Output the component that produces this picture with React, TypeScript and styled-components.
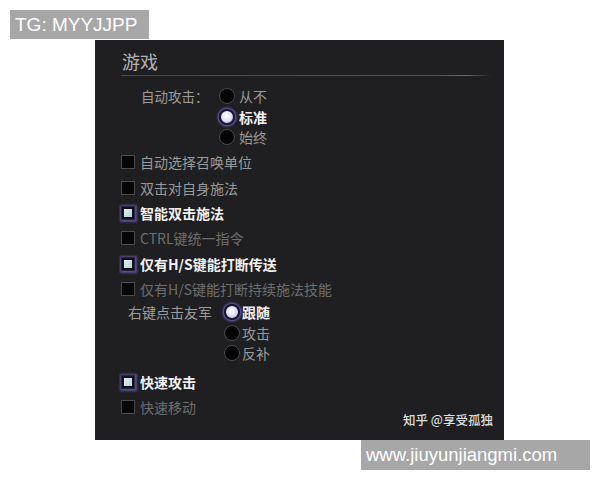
import React from "react";
import styled, { createGlobalStyle, css } from "styled-components";

const GlobalStyle = createGlobalStyle`
  html, body {
    margin: 0;
    padding: 0;
    background: #ffffff;
  }
  * { box-sizing: border-box; }
`;

const CJK = `"Noto Sans CJK SC", "Noto Sans", sans-serif`;

const Page = styled.div`
  width: 600px;
  height: 480px;
  padding-top: 10px;
  display: flex;
  flex-direction: column;
  background: #ffffff;
  overflow: hidden;
`;

const Tag = styled.div<{ $left: number; $width: number; $height: number; $size: number; $pad: number }>`
  margin-left: ${(p) => p.$left}px;
  width: ${(p) => p.$width}px;
  height: ${(p) => p.$height}px;
  padding-left: ${(p) => p.$pad}px;
  display: flex;
  align-items: center;
  background: #a7a7a7;
  color: #ffffff;
  font-family: "Liberation Sans", Arial, sans-serif;
  font-size: ${(p) => p.$size}px;
  white-space: nowrap;
  flex-shrink: 0;
`;

const Panel = styled.section`
  margin: 1px 0 0 95px;
  width: 409px;
  height: 400px;
  flex-shrink: 0;
  background: #1f1f21;
  display: flex;
  flex-direction: column;
  font-family: ${CJK};
`;

const Header = styled.header`
  margin-left: 26px;
  width: 371px;
  padding-top: 12px;
`;

const Title = styled.h2`
  margin: 0 0 4px 1px;
  font-size: 18px;
  line-height: 19px;
  font-weight: 400;
  color: #b4b4b4;
`;

const Rule = styled.div`
  height: 1px;
  background: linear-gradient(to right, #4c4c4e 0%, #525254 85%, #6a6a6a 93%, rgba(80, 80, 80, 0) 100%);
`;

const RadioGroup = styled.div<{ $indent: number; $labelWidth: number; $top: number }>`
  display: grid;
  grid-template-columns: ${(p) => p.$labelWidth}px 1fr;
  padding-left: ${(p) => p.$indent}px;
  margin-top: ${(p) => p.$top}px;
`;

const GroupLabel = styled.div<{ $size: number }>`
  height: 20.5px;
  display: flex;
  align-items: center;
  font-size: ${(p) => p.$size}px;
  color: #9c9c9c;
  white-space: nowrap;
`;

const Options = styled.div`
  display: flex;
  flex-direction: column;
`;

const OptionRow = styled.div<{ $gap: number }>`
  height: 20.5px;
  display: flex;
  align-items: center;
  gap: ${(p) => p.$gap}px;
`;

const Radio = styled.span<{ $on?: boolean }>`
  width: 16px;
  height: 16px;
  border-radius: 50%;
  flex-shrink: 0;
  ${(p) =>
    p.$on
      ? css`
          background: radial-gradient(circle at 45% 40%, #ffffff 0%, #e6e4f6 45%, #b9b4e0 100%);
          border: 2px solid #1a1830;
          box-shadow: 0 0 2px 1.5px rgba(120, 108, 210, 0.75);
        `
      : css`
          background: #040404;
          border: 1.5px solid #4a4a4c;
        `}
`;

type Tone = "active" | "normal" | "muted";

const toneColor: Record<Tone, string> = {
  active: "#f2f2f2",
  normal: "#9a9a9a",
  muted: "#6e6e6e",
};

const Label = styled.span<{ $tone: Tone }>`
  font-size: 14px;
  line-height: 16px;
  color: ${(p) => toneColor[p.$tone]};
  font-weight: ${(p) => (p.$tone === "active" ? 700 : 400)};
  white-space: nowrap;
`;

const CheckList = styled.div<{ $top: number; $bottom?: number }>`
  display: flex;
  flex-direction: column;
  padding-left: 26px;
  margin-top: ${(p) => p.$top}px;
  padding-bottom: ${(p) => p.$bottom ?? 0}px;
`;

const CheckRow = styled.div`
  height: 25.4px;
  display: flex;
  align-items: center;
  gap: 5px;
`;

const Box = styled.span<{ $on?: boolean }>`
  width: 14px;
  height: 14px;
  flex-shrink: 0;
  display: flex;
  align-items: center;
  justify-content: center;
  ${(p) =>
    p.$on
      ? css`
          background: #101018;
          border: 1px solid #2a2840;
          box-shadow: 0 0 2px 1.5px rgba(112, 100, 200, 0.7);
          &::after {
            content: "";
            width: 8px;
            height: 8px;
            background: linear-gradient(135deg, #e4f0f4, #b9d2dc);
          }
        `
      : css`
          background: #050505;
          border: 1px solid #4b4b4d;
        `}
`;

const BottomSection = styled.div`
  display: flex;
  justify-content: space-between;
  align-items: flex-end;
  margin-top: 6px;
`;

const Watermark = styled.div`
  margin-right: 11px;
  font-size: 12.5px;
  line-height: 14px;
  font-weight: 500;
  color: #dedede;
  white-space: nowrap;
`;

type Opt = { label: string; on?: boolean };
type Check = { label: string; on?: boolean; tone: Tone };

const attackOptions: Opt[] = [{ label: "从不" }, { label: "标准", on: true }, { label: "始终" }];
const rightClickOptions: Opt[] = [{ label: "跟随", on: true }, { label: "攻击" }, { label: "反补" }];

const checks: Check[] = [
  { label: "自动选择召唤单位", tone: "normal" },
  { label: "双击对自身施法", tone: "normal" },
  { label: "智能双击施法", on: true, tone: "active" },
  { label: "CTRL键统一指令", tone: "muted" },
  { label: "仅有H/S键能打断传送", on: true, tone: "active" },
  { label: "仅有H/S键能打断持续施法技能", tone: "muted" },
];

const moveChecks: Check[] = [
  { label: "快速攻击", on: true, tone: "active" },
  { label: "快速移动", tone: "muted" },
];

function RadioOptions({ options, gap }: { options: Opt[]; gap: number }) {
  return (
    <Options>
      {options.map((o) => (
        <OptionRow key={o.label} $gap={gap}>
          <Radio $on={o.on} />
          <Label $tone={o.on ? "active" : "normal"}>{o.label}</Label>
        </OptionRow>
      ))}
    </Options>
  );
}

function CheckItems({ items }: { items: Check[] }) {
  return (
    <>
      {items.map((c) => (
        <CheckRow key={c.label}>
          <Box $on={c.on} />
          <Label $tone={c.tone}>{c.label}</Label>
        </CheckRow>
      ))}
    </>
  );
}

export default function App() {
  return (
    <Page>
      <GlobalStyle />
      <Tag $left={10} $width={139} $height={29} $size={19} $pad={5}>
        TG: MYYJJPP
      </Tag>
      <Panel>
        <Header>
          <Title>游戏</Title>
          <Rule />
        </Header>

        <RadioGroup $indent={46} $labelWidth={78} $top={10}>
          <GroupLabel $size={13.5}>自动攻击：</GroupLabel>
          <RadioOptions options={attackOptions} gap={4} />
        </RadioGroup>

        <CheckList $top={2}>
          <CheckItems items={checks} />
        </CheckList>

        <RadioGroup $indent={33} $labelWidth={96} $top={0}>
          <GroupLabel $size={14}>右键点击友军</GroupLabel>
          <RadioOptions options={rightClickOptions} gap={2} />
        </RadioGroup>

        <BottomSection>
          <CheckList $top={0} $bottom={7}>
            <CheckItems items={moveChecks} />
          </CheckList>
          <Watermark>知乎 @享受孤独</Watermark>
        </BottomSection>
      </Panel>
      <Tag $left={361} $width={229} $height={30} $size={18.5} $pad={5}>
        www.jiuyunjiangmi.com
      </Tag>
    </Page>
  );
}
